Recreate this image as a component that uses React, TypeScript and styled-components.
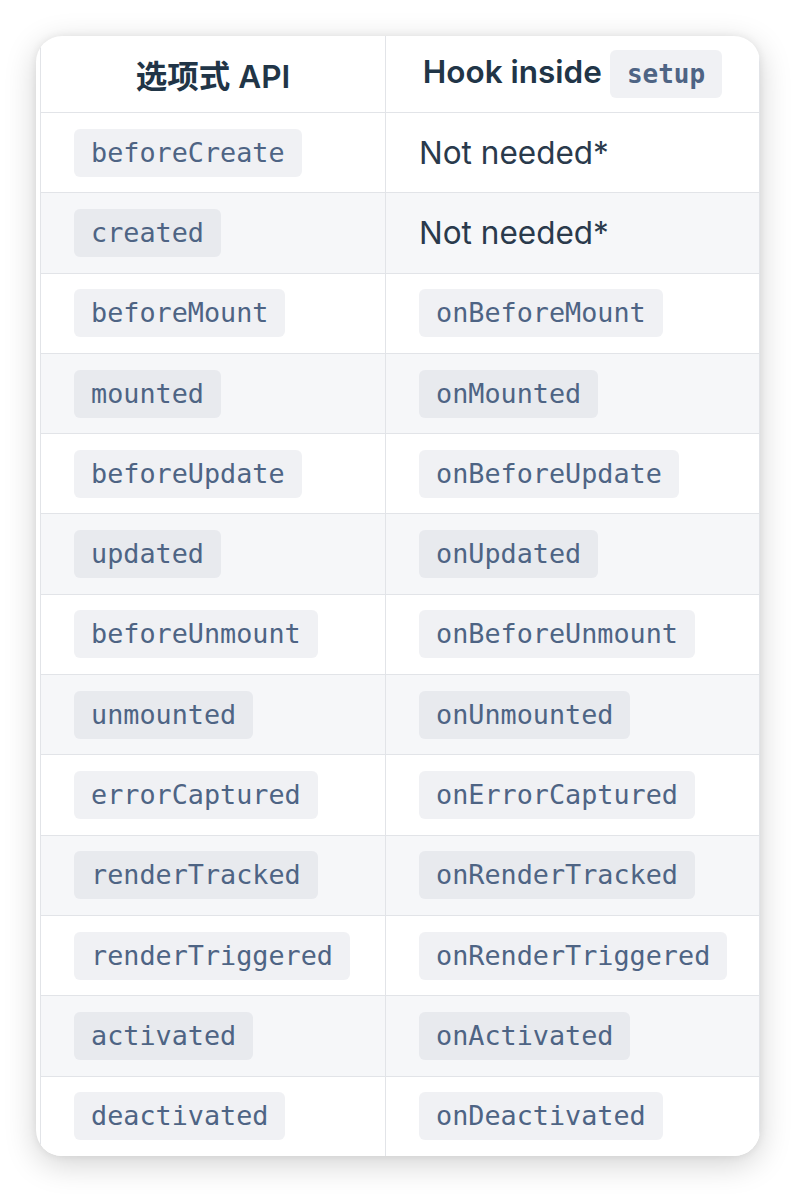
import * as React from 'react';
import styled, { createGlobalStyle } from 'styled-components';

const GlobalStyle = createGlobalStyle`
	html, body {
		margin: 0;
		padding: 0;
		background: #ffffff;
	}
	body {
		font-family: Inter, "Noto Sans CJK SC", sans-serif;
		color: #213547;
	}
`;

const Page = styled.div`
	padding: 36px 38px 38px 36px;
`;

const Card = styled.div`
	background: #ffffff;
	border-radius: 26px;
	box-shadow: 0 8px 32px rgba(0, 0, 0, 0.18), 0 0 8px rgba(0, 0, 0, 0.07);
	overflow: hidden;
	padding-left: 4px;
	width: 724px;
	box-sizing: border-box;
`;

const Table = styled.table`
	border-collapse: collapse;
	width: 720px;
	table-layout: fixed;
	border-left: 1px solid #e2e4e8;
	border-right: 1px solid #e2e4e8;
`;

const LeftCol = styled.col`
	width: 345px;
`;

const HeadCell = styled.th`
	height: 76px;
	padding: 0;
	font-family: Inter, "Noto Sans CJK SC", sans-serif;
	font-size: 31.5px;
	font-weight: 600;
	color: #213547;
	text-align: center;
	vertical-align: middle;
	white-space: nowrap;
	&:first-child {
		border-right: 1px solid #e2e4e8;
	}
`;

const Row = styled.tr<{ $striped: boolean }>`
	border-top: 1px solid #e2e4e8;
	background: ${({ $striped }) => ($striped ? '#f6f7f9' : '#ffffff')};
`;

const Cell = styled.td`
	height: 80.3px;
	padding: 0 0 0 33px;
	vertical-align: middle;
	box-sizing: border-box;
	&:first-child {
		border-right: 1px solid #e2e4e8;
	}
`;

const Code = styled.code<{ $bold?: boolean }>`
	display: inline-block;
	font-family: "DejaVu Sans Mono", "Liberation Mono", monospace;
	font-size: 26.8px;
	line-height: 48px;
	height: 48px;
	padding: 0 17px;
	border-radius: 6px;
	background: rgba(142, 150, 170, 0.13);
	color: #4e6484;
	font-weight: ${({ $bold }) => ($bold ? 700 : 400)};
	vertical-align: middle;
`;

const HeadCode = styled(Code)`
	margin-left: 8px;
	padding: 0 17px;
	font-size: 26px;
`;

const Plain = styled.span`
	font-size: 31.5px;
	color: #2a3a4c;
	font-weight: 400;
`;

const rows: [string, string | null][] = [
	['beforeCreate', null],
	['created', null],
	['beforeMount', 'onBeforeMount'],
	['mounted', 'onMounted'],
	['beforeUpdate', 'onBeforeUpdate'],
	['updated', 'onUpdated'],
	['beforeUnmount', 'onBeforeUnmount'],
	['unmounted', 'onUnmounted'],
	['errorCaptured', 'onErrorCaptured'],
	['renderTracked', 'onRenderTracked'],
	['renderTriggered', 'onRenderTriggered'],
	['activated', 'onActivated'],
	['deactivated', 'onDeactivated'],
];

const App: React.FC = () => {
	return (
		<Page>
			<GlobalStyle />
			<Card>
				<Table>
					<colgroup>
						<LeftCol />
						<col />
					</colgroup>
					<thead>
						<tr>
							<HeadCell>选项式 API</HeadCell>
							<HeadCell>
								Hook inside<HeadCode $bold>setup</HeadCode>
							</HeadCell>
						</tr>
					</thead>
					<tbody>
						{rows.map(([option, hook], i) => (
							<Row key={option} $striped={i % 2 === 1}>
								<Cell>
									<Code>{option}</Code>
								</Cell>
								<Cell>
									{hook ? <Code>{hook}</Code> : <Plain>Not needed*</Plain>}
								</Cell>
							</Row>
						))}
					</tbody>
				</Table>
			</Card>
		</Page>
	);
};

export default App;
